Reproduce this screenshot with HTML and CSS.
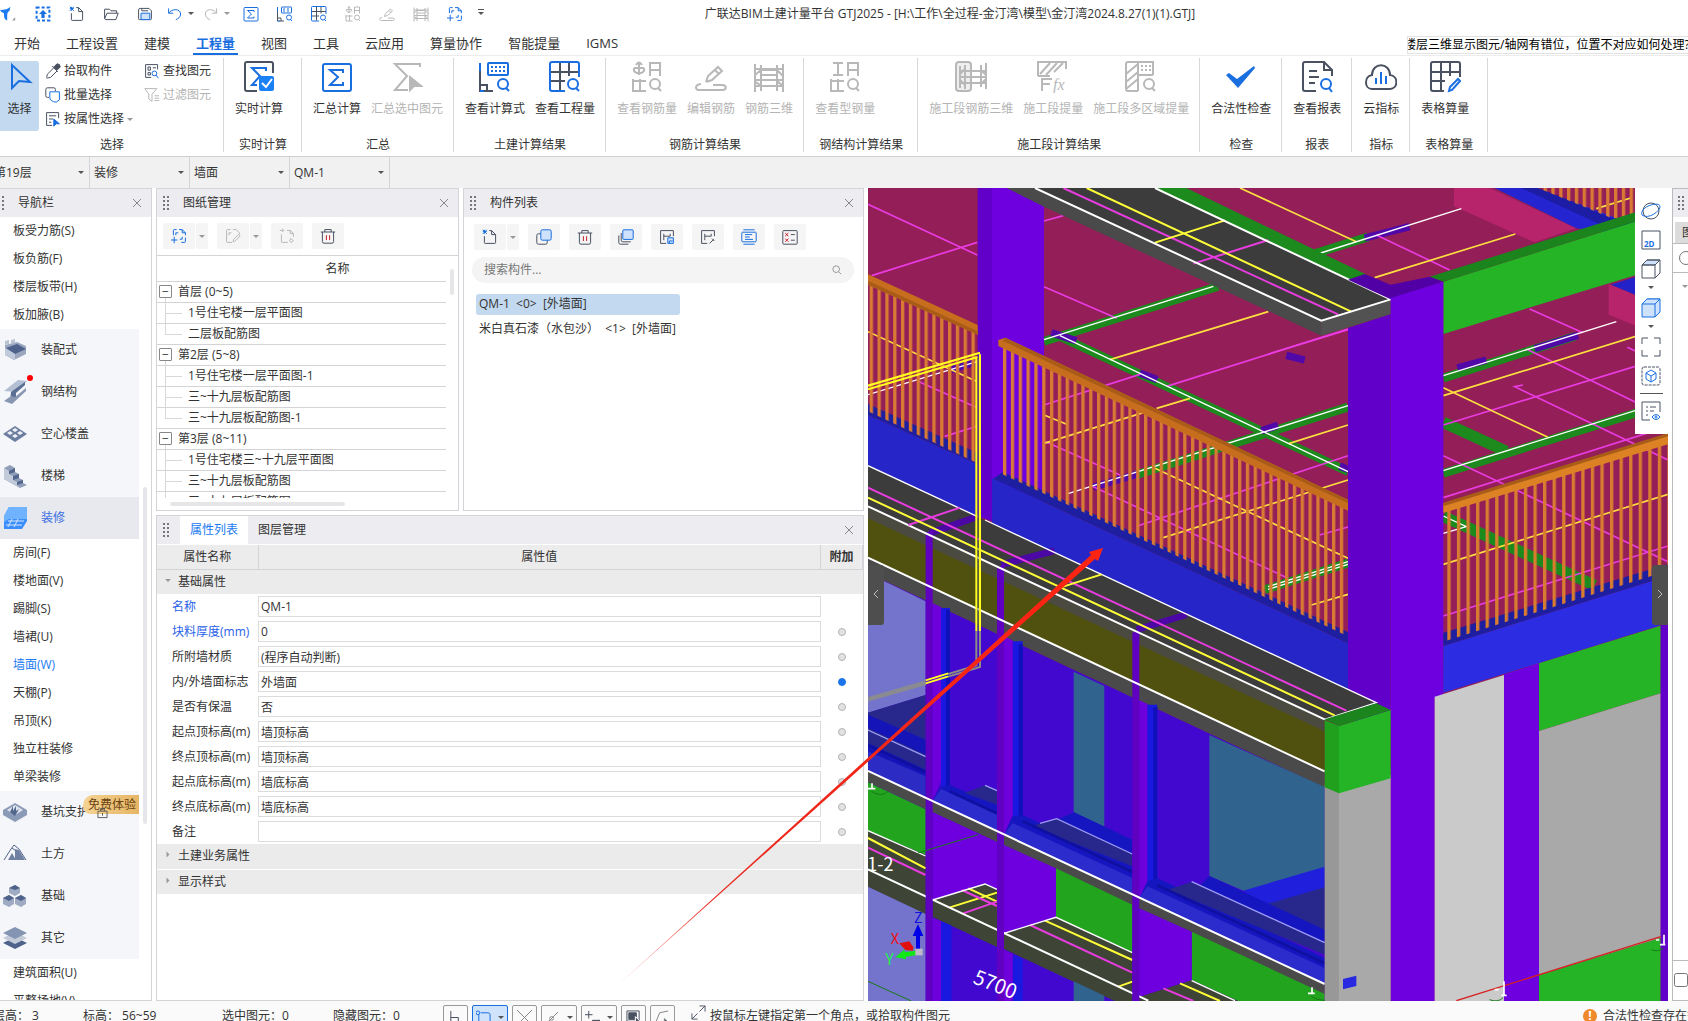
FILE: index.html
```html
<!DOCTYPE html>
<html lang="zh-CN">
<head>
    <meta charset="UTF-8">
    <meta name="viewport" content="width=device-width, initial-scale=1.0">
    <title>广联达BIM土建计量平台 GTJ2025</title>
    <link rel="stylesheet" href="styles.css">
</head>
<body>
    <!-- shared icons -->
    <svg class="sprite" aria-hidden="true">
        <symbol id="i-sigma" viewBox="0 0 32 32"><rect x="2" y="3" width="28" height="27" rx="2"/><path d="M22 12V9H9l8 7-8 8h13v-3"/></symbol>
        <symbol id="i-formula" viewBox="0 0 32 32"><path d="M1 10v20h13M1 24h7v6" class="ink"/><path d="M1 10V2M1 30h4"/><rect x="9" y="2" width="20" height="12" rx="1"/><path d="M12 6h15M12 10h15" stroke-dasharray="2 2"/><circle cx="24" cy="23" r="5"/><path d="M27 27l3 3"/></symbol>
        <symbol id="i-grid" viewBox="0 0 32 32"><path d="M1 11h29M1 20h15M11 1v28M20 1v14" class="ink"/><path d="M16 30H3q-2 0-2-2V3q0-2 2-2h25q2 0 2 2v13"/><circle cx="24" cy="23" r="5"/><path d="M27 27l3 3"/></symbol>
        <symbol id="i-rebar" viewBox="0 0 32 32"><path d="M8 1v13M5 4q3-5 6 0M3 7c-2 7 12 7 10 0M3 7h10M19 15V2h10v13M19 9h10M2 18v12h13M9 18v12M2 20h13"/><circle cx="24" cy="23" r="5"/><path d="M27 27l3 3"/></symbol>
        <symbol id="i-edit" viewBox="0 0 32 32"><path d="M11 21l2-6L23 6l4 4-10 9-6 2M20 9l4 4M6 23c-7 1-6 6-1 6h22c5 0 5-5 0-5h-9"/></symbol>
        <symbol id="i-rebar3d" viewBox="0 0 32 32"><path d="M2 3v28M8 4v26M24 4v26M30 3v28M2 8h28M2 14l6-5h16l6 6M3 19h26M3 25h26M8 14h16M3 21l5 4M24 20l5 4"/></symbol>
        <symbol id="i-steel" viewBox="0 0 32 32"><path d="M4 2h10M4 14h10M9 2v12M19 15V2h10v13M19 9h10M2 18v12h13M9 18v12M2 20h13"/><circle cx="24" cy="23" r="5"/><path d="M27 27l3 3"/></symbol>
        <symbol id="i-newdwg" viewBox="0 0 20 20"><path d="M3 9V3q0-1 1-1h3M10 2h4l4 4v3M18 12v5q0 1-1 1h-4M4 11v8M0 15h8M6 6h3M6 6v3M14 11v3h-3M14 2v4h4"/></symbol>
        <symbol id="i-newfile" viewBox="0 0 20 20"><path d="M3 9v8q0 1 1 1h12q1 0 1-1V7l-5-5H9M12 2v5h5" class="ink"/><path d="M1 1l5 5M6 1L1 6M3 1v5M1 3h5"/></symbol>
        <symbol id="i-trash" viewBox="0 0 20 20"><path d="M1 5h18M6 5V2h8v3M3 5v12q0 2 2 2h10q2 0 2-2V5" class="ink"/><path d="M8 9v6M12 9v6" class="red"/></symbol>
        <symbol id="i-close" viewBox="0 0 10 10"><path d="M1 1l8 8M9 1l-8 8"/></symbol>
        <symbol id="i-dots" viewBox="0 0 6 14"><path d="M1 0v14M5 0v14" stroke-dasharray="2 2"/></symbol>
        <symbol id="i-search" viewBox="0 0 12 12"><circle cx="5" cy="5" r="4"/><path d="M8 8l3 3"/></symbol>
        <symbol id="i-cube" viewBox="0 0 20 20"><path d="M1 6l5-5h13l-5 5z" class="pale"/><path d="M1 6l5-5h13v13l-5 5H1zM1 6h13v13M14 6l5-5"/></symbol>
    </svg>

    <div class="app">
        <header class="titlebar">
            <div class="quick">
                <button class="qbtn logo" aria-label="广联达"><svg viewBox="0 0 20 20"><path d="M0 5q9 0 13-4l-1 5q-3 1-3 5v7q-4-1-4-6V9q-3 0-5-4z" fill="#1a7bf2" stroke="none"/><path d="M19 14v4h-4z" fill="#999" stroke="none"/></svg></button>
                <button class="qbtn" aria-label="上传"><svg viewBox="0 0 20 20"><rect x="2" y="2" width="16" height="16" stroke-dasharray="3 2" stroke-width="2"/><path d="M10 5l5 5h-3v5H8v-5H5z" fill="#1a6fe0" stroke="none"/></svg></button>
                <button class="qbtn" aria-label="新建"><svg><use href="#i-newfile"/></svg></button>
                <button class="qbtn" aria-label="打开"><svg class="dark" viewBox="0 0 20 20"><path d="M2 16V4h6l2 2h7v3M2 16L5 9h14l-3 8H3z"/></svg></button>
                <button class="qbtn" aria-label="保存"><svg viewBox="0 0 20 20"><path d="M4 3h11l3 3v10q0 1-1 1H3q-1 0-1-1V5q0-2 2-2zM6 3v3h8" class="ink"/><path d="M5 17V9h11v8z" class="pale"/></svg></button>
                <button class="qbtn narrow" aria-label="撤销"><svg viewBox="0 0 20 20"><path d="M2 3v6h6M2 9c4-6 15-6 15 1 0 4-3 6-6 7"/></svg></button>
                <i class="caret"></i>
                <button class="qbtn narrow off" aria-label="恢复"><svg viewBox="0 0 20 20"><path d="M17 3v6h-6M17 9C13 3 3 3 3 10c0 4 3 6 6 7"/></svg></button>
                <i class="caret light"></i>
                <button class="qbtn" aria-label="汇总计算"><svg><use href="#i-sigma"/></svg></button>
                <button class="qbtn" aria-label="查看计算式"><svg><use href="#i-formula"/></svg></button>
                <button class="qbtn" aria-label="查看工程量"><svg><use href="#i-grid"/></svg></button>
                <button class="qbtn off" aria-label="查看钢筋量"><svg><use href="#i-rebar"/></svg></button>
                <button class="qbtn off" aria-label="编辑钢筋"><svg><use href="#i-edit"/></svg></button>
                <button class="qbtn off" aria-label="钢筋三维"><svg><use href="#i-rebar3d"/></svg></button>
                <button class="qbtn" aria-label="添加图纸"><svg><use href="#i-newdwg"/></svg></button>
                <button class="qbtn more" aria-label="更多"><i class="caret"></i></button>
            </div>
            <h1>广联达BIM土建计量平台 GTJ2025 - [H:\工作\全过程-金汀湾\模型\金汀湾2024.8.27(1)(1).GTJ]</h1>
        </header>

        <div class="tabrow">
            <nav class="tabs">
                <a href="#">开始</a>
                <a href="#">工程设置</a>
                <a href="#">建模</a>
                <a href="#" class="active">工程量</a>
                <a href="#">视图</a>
                <a href="#">工具</a>
                <a href="#">云应用</a>
                <a href="#">算量协作</a>
                <a href="#">智能提量</a>
                <a href="#">IGMS</a>
            </nav>
            <input class="help" type="text" aria-label="帮助搜索" value="楼层三维显示图元/轴网有错位，位置不对应如何处理?">
        </div>

        <div class="ribbon">
            <section class="group first">
                <div class="tools">
                    <button class="big pressed"><svg viewBox="0 0 32 32"><path d="M8 4v23l7-7 11 1z"/></svg>选择</button>
                    <div class="stack">
                        <button class="small"><svg class="dark" viewBox="0 0 20 20"><path d="M2 18l1-4 8-8 4 4-8 8-5 1M9 4l7 7" /><path d="M11 5l4-4q4 0 4 4l-4 4z" fill="#4a5262"/></svg>拾取构件</button>
                        <button class="small"><svg viewBox="0 0 20 20"><path d="M5 13H3q-2 0-2-2V3q0-2 2-2h8q2 0 2 2v2" class="ink"/><path d="M6 6h12v10l-4 3q-8-1-8-6z"/></svg>批量选择</button>
                        <button class="small"><svg viewBox="0 0 20 20"><path d="M9 18H2V2h15v7M5 6h9M5 10h5M5 14h3" class="ink"/><path d="M11 10v9l3-3h4z" fill="#1a6fe0"/></svg>按属性选择<i class="caret light"></i></button>
                    </div>
                    <div class="stack second">
                        <button class="small"><svg viewBox="0 0 20 20"><path d="M9 18H2V2h15v6M5 5h3v4H5zM11 6h4M5 12h3v3H5z" class="ink"/><circle cx="13" cy="13" r="3"/><path d="M15 15l3 4"/></svg>查找图元</button>
                        <button class="small off" disabled><svg viewBox="0 0 20 20"><path d="M1 2h15l-6 7v9l-4-3V9zM13 11h6M13 14h6M13 17h6"/></svg>过滤图元</button>
                    </div>
                </div>
                <h2>选择</h2>
            </section>
            <section class="group">
                <div class="tools">
                    <button class="big"><svg viewBox="0 0 32 32"><path d="M14 30H4q-2 0-2-2V3q0-2 2-2h24q2 0 2 2v9" class="ink"/><path d="M23 10V7H9l8 8-8 9h5"/><rect x="16" y="15" width="15" height="15" rx="2" fill="#1a80f5" stroke="none"/><path d="M19 22l4 4 6-8" class="white"/></svg>实时计算</button>
                </div>
                <h2>实时计算</h2>
            </section>
            <section class="group">
                <div class="tools">
                    <button class="big"><svg><use href="#i-sigma"/></svg>汇总计算</button>
                    <button class="big off" disabled><svg viewBox="0 0 32 32"><path d="M29 6V3H4l12 12L4 29h13"/><path d="M19 16v13l4-4h7z" fill="#b8b8b8"/></svg>汇总选中图元</button>
                </div>
                <h2>汇总</h2>
            </section>
            <section class="group">
                <div class="tools">
                    <button class="big"><svg><use href="#i-formula"/></svg>查看计算式</button>
                    <button class="big"><svg><use href="#i-grid"/></svg>查看工程量</button>
                </div>
                <h2>土建计算结果</h2>
            </section>
            <section class="group">
                <div class="tools">
                    <button class="big off" disabled><svg><use href="#i-rebar"/></svg>查看钢筋量</button>
                    <button class="big off" disabled><svg><use href="#i-edit"/></svg>编辑钢筋</button>
                    <button class="big off" disabled><svg><use href="#i-rebar3d"/></svg>钢筋三维</button>
                </div>
                <h2>钢筋计算结果</h2>
            </section>
            <section class="group">
                <div class="tools">
                    <button class="big off" disabled><svg><use href="#i-steel"/></svg>查看型钢量</button>
                </div>
                <h2>钢结构计算结果</h2>
            </section>
            <section class="group">
                <div class="tools">
                    <button class="big off" disabled><svg viewBox="0 0 32 32"><rect x="1" y="1" width="15" height="29" rx="3" fill="#eee"/><path d="M5 5v22M10 4v24M26 4v22M31 2v26M5 10h26M5 16h26M5 22h26M5 13l5-5M26 9l5 5M5 19l5 5M26 23l5-5"/></svg>施工段钢筋三维</button>
                    <button class="big off" disabled><svg viewBox="0 0 32 32"><path d="M1 15V1h28v7M1 15h12M3 13L13 2M9 14L20 2M17 11l9-9M5 30V17M5 18h10M5 23h8"/><text x="16" y="29">fx</text></svg>施工段提量</button>
                    <button class="big off" disabled><svg viewBox="0 0 32 32"><path d="M13 30H3q-2 0-2-2V3q0-2 2-2h25v13M13 1v29M1 13L13 3M1 21l12-10M1 28l12-10M13 14h15"/><path d="M16 5h10M16 9h10" stroke-dasharray="2 2"/><circle cx="24" cy="23" r="5"/><path d="M27 27l3 3"/></svg>施工段多区域提量</button>
                </div>
                <h2>施工段计算结果</h2>
            </section>
            <section class="group">
                <div class="tools">
                    <button class="big"><svg viewBox="0 0 32 32"><path d="M1 14l3-2 8 6L29 5l1 2-17 20z" fill="#1a6fe0" stroke="none"/></svg>合法性检查</button>
                </div>
                <h2>检查</h2>
            </section>
            <section class="group">
                <div class="tools">
                    <button class="big"><svg viewBox="0 0 32 32"><path d="M15 30H4q-2 0-2-2V3q0-2 2-2h19l8 8v6M23 1v8h8M8 10h8M8 16h10M8 22h6" class="ink"/><circle cx="25" cy="23" r="5"/><path d="M28 27l3 4"/></svg>查看报表</button>
                </div>
                <h2>报表</h2>
            </section>
            <section class="group">
                <div class="tools">
                    <button class="big"><svg viewBox="0 0 32 32"><path d="M7 28c-8 0-8-13 0-14C7 1 25 1 25 14c9 1 8 14 0 14z" class="ink"/><path d="M11 17v6M16 11v12M21 15v8"/></svg>云指标</button>
                </div>
                <h2>指标</h2>
            </section>
            <section class="group">
                <div class="tools">
                    <button class="big"><svg viewBox="0 0 32 32"><path d="M15 30H4q-2 0-2-2V3q0-2 2-2h25q2 0 2 2v13M2 11h29M2 20h14M12 1v29M21 1v14" class="ink"/><path d="M20 30l1-4 8-8 2 2-8 9z"/></svg>表格算量</button>
                </div>
                <h2>表格算量</h2>
            </section>
        </div>

        <div class="selectors">
            <label class="pick"><select aria-label="楼层"><option>第19层</option></select></label>
            <label class="pick"><select aria-label="构件分类"><option>装修</option></select></label>
            <label class="pick"><select aria-label="构件类型"><option>墙面</option></select></label>
            <label class="pick"><select aria-label="构件"><option>QM-1</option></select></label>
        </div>

        <main class="workspace">
            <aside class="panel navpanel">
                <div class="panel-head"><svg class="dots"><use href="#i-dots"/></svg><h3>导航栏</h3><button class="close" aria-label="关闭"><svg><use href="#i-close"/></svg></button></div>
                <div class="nav">
                    <a href="#">板受力筋(S)</a>
                    <a href="#">板负筋(F)</a>
                    <a href="#">楼层板带(H)</a>
                    <a href="#">板加腋(B)</a>
                    <a href="#" class="cat"><svg viewBox="0 0 24 24"><path d="M2 7l12-3 9 4v8l-12 6-9-5z" fill="#9aa7bf"/><path d="M3 10l11-4 9 5-11 5z" fill="#4f628b"/><path d="M2 3l4-1v4L2 7zM8 2l4-1v4L8 6z" fill="#b9c3d4"/><path d="M2 10l10 6v6L2 17z" fill="#c0cada"/></svg>装配式</a>
                    <a href="#" class="cat"><svg viewBox="0 0 24 24"><path d="M1 11L15 0l9 1-11 11z" fill="#b3bfd2"/><path d="M8 12L22 2v3l-9 8v4l-6 5z" fill="#5b6e94"/><path d="M1 21l7-5 4 1 11-9v3L9 24z" fill="#8796b1"/></svg>钢结构<i class="reddot"></i></a>
                    <a href="#" class="cat"><svg viewBox="0 0 24 24"><path d="M0 12l12-8 12 8-12 8z" fill="#6c7d9f"/><path d="M4 11l3-2 3 2-3 2zM9 8l3-2 3 2-3 2zM9 14l3-2 3 2-3 2zM14 11l3-2 3 2-3 2z" fill="#eef1f6"/></svg>空心楼盖</a>
                    <a href="#" class="cat"><svg viewBox="0 0 24 24"><path d="M1 4l6-3 5 3v4l4 2v4l4 2v3l4 2-7 3L1 15z" fill="#8f9db8"/><path d="M1 4l5 3v3l4 2v4l4 2v3l4 3L1 15z" fill="#c2cbda"/><path d="M6 7l6-3v4l-6 2zM10 12l6-2v4l-6 2zM14 18l6-2v3l-6 2z" fill="#52658c"/></svg>楼梯</a>
                    <a href="#" class="cat current"><svg viewBox="0 0 24 24"><path d="M6 1h18v14l-5 8H1V10z" fill="#3b8dfb"/><path d="M6 1h18v12H6L1 16v-6z" fill="#6fb3ff"/><path d="M5 15h16M3 19h16M9 13l-4 8M15 13l-4 8" stroke="#d5e7ff"/></svg>装修</a>
                    <a href="#">房间(F)</a>
                    <a href="#">楼地面(V)</a>
                    <a href="#">踢脚(S)</a>
                    <a href="#">墙裙(U)</a>
                    <a href="#" class="current">墙面(W)</a>
                    <a href="#">天棚(P)</a>
                    <a href="#">吊顶(K)</a>
                    <a href="#">独立柱装修</a>
                    <a href="#">单梁装修</a>
                    <a href="#" class="cat"><svg viewBox="0 0 24 24"><path d="M0 10l12-7 12 7v5l-12 7-12-7z" fill="#8b9ab6"/><path d="M4 10l8-5 8 5-8 5z" fill="#dfe5ee"/><path d="M7 12l3-6v5l3-5v5l3-2-4 7z" fill="#52658c"/></svg>基坑支护<svg class="lock" viewBox="0 0 12 12"><path d="M1 4h10v7H1zM4 4V1h4v3M6 6v3" stroke="#555"/></svg><em class="trial">免费体验</em></a>
                    <a href="#" class="cat"><svg viewBox="0 0 24 24"><path d="M1 18L8 7l3-4 5 4 7 11M9 6l4 3" stroke="#52658c" stroke-width="1"/><path d="M5 18l4-7 4 7zM12 18V7l4 1 6 10z" fill="#6f80a2"/></svg>土方</a>
                    <a href="#" class="cat"><svg viewBox="0 0 24 24"><path d="M6 4l6-3 5 3v5l-5 3-6-3zM0 14l6-3 5 3v6l-5 3-6-3zM12 14l6-3 5 3v6l-5 3-6-3z" fill="#9eabc2"/><path d="M6 4l6-3 5 3-5 2zM0 14l6-3 5 3-5 3zM12 14l6-3 5 3-5 3z" fill="#4f628b"/></svg>基础</a>
                    <a href="#" class="cat"><svg viewBox="0 0 24 24"><path d="M0 17l12-6 12 6-12 6z" fill="#4f628b"/><path d="M0 12l12-6 12 6-12 6z" fill="#c3cbd9"/><path d="M0 7l12-6 12 6-12 6z" fill="#8495b4"/></svg>其它</a>
                    <a href="#">建筑面积(U)</a>
                    <a href="#">平整场地(V)</a>
                </div>
                <i class="navbar-thumb"></i>
            </aside>

            <div class="center">
                <div class="upper">
                    <section class="panel drawings">
                        <div class="panel-head"><svg class="dots"><use href="#i-dots"/></svg><h3>图纸管理</h3><button class="close" aria-label="关闭"><svg><use href="#i-close"/></svg></button></div>
                        <div class="iconbar">
                            <span class="split"><button aria-label="添加图纸"><svg><use href="#i-newdwg"/></svg></button><button class="drop" aria-label="更多"><i class="caret light"></i></button></span>
                            <span class="split off"><button aria-label="编辑图纸"><svg viewBox="0 0 20 20"><path d="M9 18H3q-1 0-1-1V3q0-1 1-1h4M10 2h4l4 4v2M5 6h3M5 6v3M10 17l1-3 6-6 2 2-7 7z"/></svg></button><button class="drop" aria-label="更多"><i class="caret light"></i></button></span>
                            <button class="off" aria-label="替换图纸"><svg viewBox="0 0 20 20"><path d="M3 8v9q0 1 1 1h7M10 3h4l4 4v4M1 3h5l-2-2M6 3L4 5M14 3v4h4M13 16l2-3 3 3-3 2z"/></svg></button>
                            <button aria-label="删除图纸"><svg><use href="#i-trash"/></svg></button>
                        </div>
                        <div class="tree-head">名称</div>
                        <ul class="tree">
                            <li class="node"><button aria-label="折叠">−</button>首层 (0~5)</li>
                            <li>1号住宅楼一层平面图</li>
                            <li class="last">二层板配筋图</li>
                            <li class="node"><button aria-label="折叠">−</button>第2层 (5~8)</li>
                            <li>1号住宅楼一层平面图-1</li>
                            <li>三~十九层板配筋图</li>
                            <li class="last">三~十九层板配筋图-1</li>
                            <li class="node"><button aria-label="折叠">−</button>第3层 (8~11)</li>
                            <li>1号住宅楼三~十九层平面图</li>
                            <li>三~十九层板配筋图</li>
                            <li>三~十九层板配筋图</li>
                        </ul>
                        <i class="hthumb"></i>
                        <i class="vthumb"></i>
                    </section>

                    <section class="panel components">
                        <div class="panel-head"><svg class="dots"><use href="#i-dots"/></svg><h3>构件列表</h3><button class="close" aria-label="关闭"><svg><use href="#i-close"/></svg></button></div>
                        <div class="iconbar">
                            <span class="split"><button aria-label="新建"><svg><use href="#i-newfile"/></svg></button><button class="drop" aria-label="更多"><i class="caret light"></i></button></span>
                            <button aria-label="复制"><svg viewBox="0 0 20 20"><path d="M6 6H3q-2 0-2 2v9q0 2 2 2h9q2 0 2-2v-3" class="ink"/><rect x="6" y="1" width="13" height="13" rx="2" class="pale"/></svg></button>
                            <button aria-label="删除"><svg><use href="#i-trash"/></svg></button>
                            <button aria-label="层间复制"><svg viewBox="0 0 20 20"><path d="M4 5v9q0 2 2 2h10M1 8v9q0 2 2 2h10" class="ink"/><rect x="6" y="1" width="13" height="12" rx="1" class="pale"/></svg></button>
                            <button aria-label="存档"><svg viewBox="0 0 20 20"><path d="M9 18H2V2h16v7M6 6v8M6 9h8M14 6v3" class="ink"/><path d="M11 11h7v7h-7zM13 18v-3h4" class="pale"/></svg></button>
                            <button aria-label="提取"><svg class="dark" viewBox="0 0 20 20"><path d="M9 18H2V2h16v7M6 6v8M6 9h8M14 6v3M12 18l5-5M15 12l3 3" /></svg></button>
                            <button aria-label="排序"><svg viewBox="0 0 20 20"><path d="M3 1h14M3 19h14M5 7h9M5 10h6M5 13h10"/><rect x="1" y="4" width="18" height="12" rx="1"/></svg></button>
                            <button aria-label="批量"><svg viewBox="0 0 20 20"><rect x="1" y="2" width="18" height="17" rx="1" class="ink"/><path d="M11 7h5M11 14h5" class="ink"/><path d="M4 5l4 4M8 5L4 9M4 12l4 4M8 12l-4 4" class="red"/></svg></button>
                        </div>
                        <label class="search"><input type="search" placeholder="搜索构件..." aria-label="搜索构件"><svg><use href="#i-search"/></svg></label>
                        <ul class="complist">
                            <li class="selected">QM-1&nbsp; &lt;0&gt;&nbsp; [外墙面]</li>
                            <li>米白真石漆（水包沙）&nbsp; &lt;1&gt;&nbsp; [外墙面]</li>
                        </ul>
                    </section>
                </div>

                <section class="panel props">
                    <div class="panel-head"><svg class="dots"><use href="#i-dots"/></svg><button class="ptab active">属性列表</button><button class="ptab">图层管理</button><button class="close" aria-label="关闭"><svg><use href="#i-close"/></svg></button></div>
                    <table>
                        <thead>
                            <tr><th class="c-name">属性名称</th><th>属性值</th><th class="c-add">附加</th></tr>
                        </thead>
                        <tbody>
                            <tr class="section"><td colspan="3"><i class="caret light"></i>基础属性</td></tr>
                            <tr><td class="blue"><label for="p1">名称</label></td><td><input id="p1" type="text" value="QM-1"></td><td></td></tr>
                            <tr><td class="blue"><label for="p2">块料厚度(mm)</label></td><td><input id="p2" type="text" value="0"></td><td><input type="checkbox" aria-label="附加块料厚度"></td></tr>
                            <tr><td><label for="p3">所附墙材质</label></td><td><input id="p3" type="text" value="(程序自动判断)"></td><td><input type="checkbox" aria-label="附加所附墙材质"></td></tr>
                            <tr><td><label for="p4">内/外墙面标志</label></td><td><input id="p4" type="text" value="外墙面"></td><td><input type="checkbox" aria-label="附加内/外墙面标志" checked></td></tr>
                            <tr><td><label for="p5">是否有保温</label></td><td><input id="p5" type="text" value="否"></td><td><input type="checkbox" aria-label="附加是否有保温"></td></tr>
                            <tr><td><label for="p6">起点顶标高(m)</label></td><td><input id="p6" type="text" value="墙顶标高"></td><td><input type="checkbox" aria-label="附加起点顶标高"></td></tr>
                            <tr><td><label for="p7">终点顶标高(m)</label></td><td><input id="p7" type="text" value="墙顶标高"></td><td><input type="checkbox" aria-label="附加终点顶标高"></td></tr>
                            <tr><td><label for="p8">起点底标高(m)</label></td><td><input id="p8" type="text" value="墙底标高"></td><td><input type="checkbox" aria-label="附加起点底标高"></td></tr>
                            <tr><td><label for="p9">终点底标高(m)</label></td><td><input id="p9" type="text" value="墙底标高"></td><td><input type="checkbox" aria-label="附加终点底标高"></td></tr>
                            <tr><td><label for="p10">备注</label></td><td><input id="p10" type="text" value=""></td><td><input type="checkbox" aria-label="附加备注"></td></tr>
                            <tr class="section"><td colspan="3"><i class="caret light side"></i>土建业务属性</td></tr>
                            <tr class="section"><td colspan="3"><i class="caret light side"></i>显示样式</td></tr>
                        </tbody>
                    </table>
                </section>
            </div>

            <section class="viewport">
                <svg class="scene" viewBox="0 0 2400 2439" preserveAspectRatio="xMidYMid slice">
                    <defs>
                        <pattern id="posts" patternUnits="userSpaceOnUse" x="5" y="0" width="23.5" height="100"><rect width="10" height="100" fill="#d87a33"/></pattern>
                        <pattern id="posts-main" patternUnits="userSpaceOnUse" x="405" y="0" width="23.5" height="100"><rect width="10" height="100" fill="#d87a33"/></pattern>
                        <pattern id="posts-right" patternUnits="userSpaceOnUse" x="1738" y="0" width="28.7" height="100"><rect width="10" height="100" fill="#d87c30"/></pattern>
                    </defs>
                    <rect width="2400" height="2439" fill="#941e58"/>

                    <!-- far wall and beam, top right -->
                    <path fill="#b8246c" d="M1758 0H1865L2125 121L2000 163L1758 55z"/>
                    <path fill="#2424d0" d="M1880 0H2020L2400 100V160L2125 121z"/>
                    <path fill="#1c1ca4" d="M1960 0H2020L2300 120H2220z"/>
                    <path fill="#941e58" d="M2010 0H2400V70L2250 92z"/>
                    <path stroke="#ffe840" stroke-width="5" d="M2185 62L2288 30"/>
                    <path fill="url(#posts-main)" d="M2010 0H2400V90H2230z"/>
                    <path fill="#2222c8" d="M2228 290L2400 236V360z"/>
                    <path fill="#b8246c" d="M2222 288L2400 362V452L2222 380z"/>

                    <!-- green beams under the slab -->
                    <g fill="none" stroke="#1c8a1c" stroke-width="26">
                        <path d="M528 460L1050 295M570 443L1440 851M800 862L1440 657M1190 1205L1440 1125M1330 200L1500 147"/>
                        <path d="M1726 570L2120 445M1726 856L2400 645"/>
                        <path stroke-width="34" d="M1726 703L1915 790M1726 985L2180 1192"/>
                    </g>
                    <g fill="none" stroke="#5008a8" stroke-width="22">
                        <path d="M550 434L625 458M815 555L868 575M676 897L812 857M1180 728L1230 712M1490 150L1625 116M1768 540L1855 516M2000 482L2130 442M1255 502L1310 516M1415 834L1440 844M250 545L320 522"/>
                    </g>
                    <g fill="none" stroke="#e83ce0" stroke-width="5">
                        <path d="M0 49L328 201M11 263L328 163M528 99L586 83M528 296L746 391M896 595L1440 423M528 651L816 559M528 759L756 861M676 896L1260 1171M811 1013L1440 803M1355 1041L1440 1017M150 580L329 660M230 745L329 714"/>
                        <path d="M1525 141L1745 246M1985 363L2145 434M1726 711L2400 505M1975 483L2400 690M1965 591L1940 596L2400 816M2278 478L2400 535M1726 929L2400 716M1726 803L2400 1121M1726 1284L2400 1074"/>
                    </g>
                    <g fill="none" stroke="#ffe040" stroke-width="5">
                        <path d="M0 431L325 580M726 515L1201 371M866 661L966 631M528 766L826 674M528 681L596 709M861 841L1440 1111M886 1049L1440 876M1262 767L1440 711M1330 1251L1440 1219M1116 0L1465 161"/>
                        <path d="M1520 269L1942 138M1726 623L2400 415M1726 599L2040 748M1726 1129L2400 919"/>
                    </g>
                    <g fill="none" stroke="#fff" stroke-width="4">
                        <path d="M528 455L1036 295M576 443L1440 851M600 917L1440 653M1200 1196L1440 1121M1200 1204L1440 1129M1358 195L1780 62M1726 563L2245 401M1726 848L2400 637M1726 984L1795 1016L1726 1036M0 620L329 520"/>
                    </g>
                    <path fill="#25b425" d="M1726 281L2400 70V232L1726 438z"/>
                    <path fill="#1c841c" d="M1685 266L2400 42V70L1726 281z"/>

                    <!-- column 1 -->
                    <path fill="#6000c8" d="M329 0H372V1000L329 985z"/>
                    <path fill="#6e00e0" d="M372 0H528V1000H372z"/>

                    <!-- upper slab -->
                    <path fill="#1c8a1c" d="M861 0H955L1500 262L1430 285z"/>
                    <path fill="#4a4a4a" d="M416 0H501L1360 398V443L528 56z"/>
                    <path fill="#3c3c3c" d="M501 0H861L1568 334L1360 398z"/>
                    <path fill="#525252" d="M1360 398L1568 334V379L1360 443z"/>
                    <path fill="none" stroke="#e83ce0" stroke-width="6" d="M586 0L1410 379M976 227L1201 156"/>
                    <path fill="none" stroke="#ffff38" stroke-width="6" d="M656 0L1450 371M861 164L1071 97"/>
                    <path fill="none" stroke="#fff" stroke-width="6" d="M501 0L1360 398L1568 334L861 0"/>
                    <path stroke="#e83ce0" stroke-width="5" d="M1200 499L1440 425"/>

                    <!-- main column -->
                    <path fill="#5000a4" d="M1440 275L1490 258L1568 290L1685 266L1726 281L1568 334z"/>
                    <path fill="#6000c8" d="M1440 420L1568 379V1600H1440z"/>
                    <path fill="#6e00e0" d="M1568 330L1726 281V1530H1700V2439H1568z"/>

                    <!-- balcony beams -->
                    <path fill="#2525c8" d="M0 681L329 829V986L0 833zM372 870L1440 1366V1505L372 1006z"/>
                    <path fill="#1e1ea0" d="M0 648L329 795V829L0 681zM376 872L405 852L1440 1332V1366z"/>
                    <path fill="#2c2ce2" d="M1726 1374L2400 1164V1305L1726 1514z"/>
                    <path fill="#1e1ea0" d="M1726 1334L2400 1128V1164L1726 1374z"/>

                    <!-- railings -->
                    <path fill="url(#posts)" d="M0 280L329 430V826L0 670z"/>
                    <path fill="#c66e1e" d="M0 259L329 411V440L0 290z"/>
                    <path fill="#a85c18" d="M0 278L329 430V440L0 290z"/>
                    <path fill="url(#posts-main)" d="M400 465L1430 950V1340L400 857z"/>
                    <path fill="#c66e1e" d="M391 456L412 449L1440 935V968L391 474z"/>
                    <path fill="#a85c18" d="M412 449L1440 935V946L404 458z"/>
                    <path fill="url(#posts-right)" d="M1730 965L2400 760V1148L1730 1360z"/>
                    <path fill="#dc8224" d="M1726 950L2400 741V769L1726 975z"/>
                    <path fill="#a85c18" d="M1726 944L2400 735V745L1726 955z"/>

                    <!-- lower slab edge -->
                    <path fill="#3c3c3c" d="M0 833L1525 1544L1370 1594L0 955z"/>
                    <path stroke="#4c08a4" stroke-width="20" d="M186 1035L329 986M400 1130L560 1088M806 1325L956 1280"/>
                    <path fill="#50500f" d="M0 955L1370 1594V1750L0 1109z"/>
                    <path fill="#4a4a40" d="M0 955L1370 1594V1630L0 991z"/>
                    <path fill="#4a4a4a" d="M0 1109L1370 1750V1799L0 1156z"/>
                    <path fill="#4208d0" d="M0 1156L1370 1799V2439H0z"/>

                    <!-- windows -->
                    <path fill="#7474cc" d="M0 1156L173 1240V1521L0 1574z"/>
                    <path fill="#28288c" d="M0 1574L173 1521V1720L0 1640z"/>
                    <path fill="#1414b8" d="M0 1580L173 1655V1830L0 1749z"/>
                    <path fill="#28288c" d="M0 1620L173 1700V1745L0 1665z"/>
                    <path fill="#2c2cc4" d="M0 1690L173 1765V1830L0 1749z"/>
                    <path fill="#30648f" d="M617 1451L709 1494V1916L617 1874zM1024 1641L1370 1797V2060L1126 2108L1024 2064z"/>
                    <path fill="#2020dc" d="M1126 2108L1370 2036V2110L1190 2155z"/>
                    <path fill="#28288c" d="M1190 2150L1370 2098V2250z"/>
                    <path fill="#1818e0" d="M219 1260H246V1820H219zM434 1360H464V1910H434zM838 1550H868V2100H838z"/>
                    <path fill="#1010b8" d="M234 1265H246V1820H234zM452 1368H464V1910H452zM856 1558H868V2100H856z"/>
                    <path fill="#1616c0" d="M219 1795L246 1791L387 1850V1930L194 1838zM434 1885L464 1881L793 2035V2119L408 1940zM617 1872L793 1955V2010L560 1900zM838 2080L868 2070L1370 2310V2388L814 2129zM1024 2064L1370 2225V2290L980 2110z"/>
                    <path fill="#28288c" d="M290 1815L351 1792L387 1808V1850zM490 1915L566 1892L793 1998V2035zM900 2105L971 2081L1370 2266V2300z"/>
                    <path fill="#2c2ccc" d="M219 1803L387 1880V1930L194 1838zM434 1905L793 2070V2119L408 1940zM838 2095L1370 2340V2388L814 2129z"/>
                    <path stroke="#1010a0" stroke-width="8" fill="none" d="M246 1810L387 1876M464 1900L793 2052M868 2092L1370 2326M0 1672L173 1752"/>
                    <path fill="none" stroke="#9c9cf4" stroke-width="4" d="M0 1626L173 1706M351 1792L387 1808M516 1906L566 1892L793 1998M971 2081L1370 2264"/>

                    <!-- band below the sill -->
                    <path fill="#4a4a4a" d="M0 1749L1370 2388V2420L0 1783z"/>
                    <path fill="#22a41e" d="M0 1783L173 1864V2001L0 1928zM564 2041L793 2150V2294L564 2188zM971 2231L1370 2418V2439H1110L971 2376z"/>
                    <path fill="#3e4436" d="M0 1928L173 2001V2180L0 2098z"/>
                    <path fill="#3e4436" d="M194 2136L351 2086L387 2104V2277L194 2187z"/>
                    <path fill="#3e4436" d="M408 2236L564 2186L793 2294V2439H740L408 2283z"/>
                    <path fill="#3e4436" d="M814 2426L971 2376L1110 2439H814z"/>
                    <path fill="#7474cc" d="M0 2096L173 2178V2439H0z"/>
                    <path fill="#1818e0" d="M219 2200L250 2212V2439H219zM434 2300L464 2312V2439H434z"/>
                    <path fill="#30648f" d="M617 2380L709 2423V2439H617z"/>
                    <path fill="#6e00e0" d="M194 1873L387 1962V2104L351 2086L194 2136zM408 1971L564 2041V2186L408 2236zM814 2161L971 2231V2376L814 2426z"/>
                    <g fill="none" stroke-width="6">
                        <path stroke="#ffff38" d="M0 1950L173 2041M301 2101L387 2141M246 2158L387 2114M531 2198L793 2316M751 2396L793 2381M936 2386L1056 2439"/>
                        <path stroke="#e83ce0" d="M0 1979L173 2061M281 2106L387 2154M286 2176L387 2141M486 2211L793 2354M886 2401L976 2439"/>
                        <path stroke="#fff" stroke-width="4" d="M0 1928L173 2004M194 2136L351 2088L387 2104M408 2236L564 2188L793 2294M971 2378L1101 2438"/>
                        <path stroke="#fff" d="M0 2044L841 2438"/>
                    </g>

                    <!-- mullions -->
                    <path fill="#6000c0" d="M173 1035L194 1026V2439H173zM387 1140L408 1128V2439H387zM793 1335L814 1325V2439H793z"/>
                    <path fill="#6e00dc" d="M194 1246L219 1257V1780L194 1838zM408 1345L434 1357V1880L408 1940zM814 1537L838 1548V2080L814 2129zM194 2190L219 2200V2439H194zM408 2285L434 2298V2439H408z"/>
                    <g fill="none" stroke="#fff" stroke-width="6">
                        <path stroke-width="4" d="M0 833L329 986M351 996L1525 1544L1370 1594"/>
                        <path d="M0 955L1370 1594M0 1109L1370 1750M0 1749L1370 2388"/>
                        <path stroke="#e83ce0" d="M0 899L1435 1568M121 1011L276 959"/>
                        <path stroke="#ffff38" d="M0 929L1400 1582M576 1199L701 1159"/>
                    </g>

                    <!-- corner block, walls -->
                    <path fill="#989898" d="M1370 1790H1413V2439H1370z"/>
                    <path fill="#a9a9a9" d="M1413 1800L1568 1760V2439H1413z"/>
                    <path fill="#20a01c" d="M1370 1596L1413 1614V1816L1370 1798z"/>
                    <path fill="#25b425" d="M1413 1614L1568 1566V1771L1413 1816z"/>
                    <path fill="#1c841c" d="M1370 1594L1525 1546L1568 1566L1413 1614z"/>
                    <path fill="#2828e0" d="M1425 2373L1465 2363V2394L1425 2404z"/>
                    <path fill="#cacaca" d="M1700 1526L1908 1461V2439H1700z"/>
                    <path fill="#6e00e0" d="M1908 1459L2013 1426V2439H1908z"/>
                    <path fill="#25b425" d="M2013 1426L2378 1313V1516L2013 1629z"/>
                    <path fill="#a9a9a9" d="M2013 1629L2378 1516V2250L2013 2362z"/>
                    <path fill="#25b425" d="M2013 2362L2378 2250V2439H2013z"/>
                    <path fill="#6000c8" d="M2378 1310L2400 1304V2439H2378z"/>
                    <path stroke="#d82020" stroke-width="4" d="M1765 2438L2378 2246"/>
                    <path fill="none" stroke="#187a18" stroke-width="3" d="M1865 2435q25 10 40-6M2350 2285q18 8 36-4M1330 2425q15 12 40 12M150 1995L330 1940M0 2380L130 2439M10 1810q30 20 50 0"/>

                    <!-- selected wall outline -->
                    <g fill="none" stroke="#ffff20" stroke-width="6">
                        <path d="M325 1330V505M336 1330V499M0 593L336 494M0 604L329 507"/>
                        <path stroke="#77774a" stroke-width="3" d="M330 1330V505"/>
                        <path stroke="#8c8c84" d="M325 1330V1432L241 1458M336 1330V1437L241 1466"/>
                        <path stroke="#8a8a92" stroke-width="14" d="M173 1484L0 1534"/>
                        <path d="M241 1456L173 1477M241 1465L173 1486"/>
                    </g>

                    <!-- axis triad -->
                    <path fill="#0000e8" d="M150 2208l16 36h-10v46h-12v-46h-10z"/>
                    <path fill="#e01010" d="M94 2266l30 -6l12 18l-2 10l-22 -2z"/>
                    <path fill="#10e818" d="M82 2308l28 -24v8l34 -4v14l-30 4v8z"/>
                    <rect x="142" y="2282" width="22" height="20" fill="#c0b8c8"/>
                    <g class="mark">
                        <text x="138" y="2204" font-size="42" fill="#1010e0">Z</text>
                        <text x="68" y="2268" font-size="44" fill="#f01010">X</text>
                        <text x="52" y="2330" font-size="48" fill="#20f050">Y</text>
                        <text x="-2" y="2050" font-size="54" fill="#fff">1-2</text>
                        <text x="312" y="2384" font-size="60" fill="#fff" transform="rotate(22 312 2384)">5700</text>
                    </g>
                    <path stroke="#fff" stroke-width="5" fill="none" d="M0 1802h22M12 1786v16M1320 2416h20M1332 2398v18M1900 2422h16M1908 2380v40M2376 2270h16M2388 2240v30M1880 2405h12M2364 2256h10"/>
                </svg>

                <button class="handle left" aria-label="收起左侧"><svg viewBox="0 0 6 10"><path d="M5 1L1 5l4 4"/></svg></button>
                <button class="handle right" aria-label="收起右侧"><svg viewBox="0 0 6 10"><path d="M1 1l4 4-4 4"/></svg></button>
                <div class="viewtools">
                    <button aria-label="动态观察"><svg viewBox="0 0 20 20"><circle cx="10" cy="10" r="8" class="ink"/><path d="M1 14C-2 6 17 0 19 5c1 5-12 14-18 9z"/></svg></button>
                    <button aria-label="二维"><svg viewBox="0 0 20 20"><rect x="1" y="1" width="18" height="18" class="ink"/><text x="3" y="17">2D</text></svg></button>
                    <button aria-label="视图方向"><svg class="dark"><use href="#i-cube"/></svg></button>
                    <i class="caret"></i>
                    <button aria-label="实体显示"><svg class="filled"><use href="#i-cube"/></svg></button>
                    <i class="caret"></i>
                    <button aria-label="全屏"><svg class="dark" viewBox="0 0 20 20"><path d="M1 7V1h6M13 1h6v6M19 13v6h-6M7 19H1v-6"/></svg></button>
                    <button aria-label="局部三维"><svg viewBox="0 0 20 20"><rect x="1" y="1" width="18" height="18" rx="2" class="ink" stroke-dasharray="3 1"/><path d="M10 4l5 3v6l-5 3-5-3V7zM5 7l5 3 5-3M10 10v6"/></svg></button>
                    <hr>
                    <button aria-label="显示设置"><svg viewBox="0 0 20 20"><path d="M9 19H1V1h18v10M5 6h2M9 6h6M5 10h2M9 10h4M5 14h2" class="ink"/><path d="M11 16q4-5 8 0-4 5-8 0z"/><circle cx="15" cy="16" r="1"/></svg></button>
                </div>
            </section>

            <aside class="rightpanel">
                <div class="panel-head"><svg class="dots"><use href="#i-dots"/></svg></div>
                <button class="rtab">图</button>
                <div class="rsearch"><input type="radio" aria-label="图层"></div>
                <div class="rbody"><i class="caret light"></i></div>
                <div class="rfoot"><input type="checkbox" aria-label="显示图层"></div>
            </aside>

            <svg class="callout" viewBox="0 0 1688 813" preserveAspectRatio="xMinYMin" aria-hidden="true">
                <defs><linearGradient id="fade" x1="0" y1="1" x2="1" y2="0"><stop offset="0" stop-color="#f5261a" stop-opacity=".4"/><stop offset=".2" stop-color="#e8281e"/><stop offset="1" stop-color="#ff2412"/></linearGradient></defs>
                <path fill="url(#fade)" d="M618 797L1091 367L1089 364L1103 360L1098 373L1095 371z"/>
            </svg>
        </main>

        <footer class="statusbar">
            <span class="stat s1">层高： 3</span>
            <span class="stat s2">标高： 56~59</span>
            <span class="stat s3">选中图元：0</span>
            <span class="stat s4">隐藏图元：0</span>
            <div class="modes">
                <button aria-label="正交"><svg viewBox="0 0 16 16"><path d="M3 1v14M3 8h8v7" class="ink"/></svg></button>
                <button class="wide on" aria-label="捕捉"><svg viewBox="0 0 16 16"><path d="M3 15V5M5 3h8q2 0 2 2v10"/><circle cx="2" cy="3" r="2"/></svg><i class="caret"></i></button>
                <button aria-label="交点"><svg class="grey" viewBox="0 0 16 16"><path d="M0 0l16 16M16 0L0 16"/></svg></button>
                <button class="wide" aria-label="中点"><svg class="grey" viewBox="0 0 16 16"><path d="M1 15L14 2"/><circle cx="7" cy="9" r="2"/></svg><i class="caret"></i></button>
                <button class="wide" aria-label="偏移"><svg class="dark" viewBox="0 0 16 16"><path d="M0 5h8M4 1v8M8 11h8v5H8z" fill="#4a5262"/></svg><i class="caret"></i></button>
                <button aria-label="选择模式"><svg class="dark" viewBox="0 0 16 16"><path d="M1 1h13v11H1z"/><path d="M3 3h8v7H3z" fill="#4a5262"/><path d="M10 7v9l3-3h3z" fill="#4a5262" stroke="#fff"/></svg></button>
                <button aria-label="折线"><svg class="grey" viewBox="0 0 16 16"><path d="M0 15L5 3l9-2"/><path d="M10 9v7l4-3z" fill="#4a5262"/></svg></button>
            </div>
            <svg class="diag" viewBox="0 0 16 16"><path d="M9 7l6-6M9 1h6v6M7 9l-6 6M1 9v6h6"/></svg>
            <span>按鼠标左键指定第一个角点，或拾取构件图元</span>
            <span class="warn"><b>!</b>合法性检查存在错误</span>
        </footer>
    </div>
</body>
</html>
```

FILE: styles.css
```css
:root {
    --ink: #4a5262;
    --blue: #1a6fe0;
    --text: #333;
    --line: #d4d4d8;
    --head: #ededf1;
}

* {
    margin: 0;
    padding: 0;
    box-sizing: border-box;
}

body {
    font-family: "Open Sans", "Noto Sans CJK SC", sans-serif;
    font-size: 12px;
    line-height: 20px;
    color: var(--text);
    background: #fff;
    overflow: hidden;
}

button, input, select {
    font: inherit;
    color: inherit;
    border: none;
    background: none;
}

a {
    color: inherit;
    text-decoration: none;
}

ul {
    list-style: none;
}

h1, h2, h3 {
    font-size: 12px;
    font-weight: 400;
}

svg {
    flex: none;
    fill: none;
    stroke: var(--blue);
}

/* icon strokes keep their width at every icon size */
symbol *, button path, button rect, button circle {
    vector-effect: non-scaling-stroke;
}

.sprite {
    position: absolute;
    width: 0;
    height: 0;
}

.ink { stroke: var(--ink); }
.red { stroke: #c8202c; }
.white { stroke: #fff; }
.pale { fill: #cfe2fb; }
.dark, .dark .ink { stroke: var(--ink); }
.grey { stroke: #888; }

.off {
    color: #b4b4b4;
    --ink: #b8b8b8;
    --blue: #b8b8b8;
}

.caret {
    flex: none;
    width: 0;
    height: 0;
    border: 3px solid transparent;
    border-top-color: #555;
    border-bottom: none;
}

.caret.light {
    border-top-color: #999;
}

.app {
    display: flex;
    flex-direction: column;
    height: 100vh;
    overflow: hidden;
}

/* title bar */
.titlebar {
    display: flex;
    align-items: center;
    height: 27px;
    padding-right: 278px;
}

.titlebar h1 {
    flex: 1;
    text-align: center;
    white-space: nowrap;
}

.quick {
    display: flex;
    align-items: center;
    width: 490px;
}

.qbtn {
    display: flex;
    justify-content: center;
    width: 34px;
}

.qbtn svg {
    width: 16px;
    height: 16px;
}

.qbtn.logo {
    width: 26px;
    justify-content: flex-start;
}

.qbtn.narrow {
    width: 26px;
}

.qbtn.narrow + .caret {
    margin-right: 4px;
}

.qbtn.more {
    width: 18px;
}

.more .caret {
    position: relative;
}

.more .caret::before {
    content: "";
    position: absolute;
    left: -3px;
    top: -6px;
    width: 6px;
    height: 1px;
    background: #555;
}

/* tabs */
.tabrow {
    display: flex;
    justify-content: space-between;
    height: 29px;
    border-bottom: 1px solid #ececec;
    padding-left: 11px;
}

.tabs {
    display: flex;
    gap: 20px;
    font-size: 13px;
}

.tabs a {
    padding: 6px 3px 0;
    border-bottom: 2px solid transparent;
}

.tabs .active {
    color: var(--blue);
    font-weight: 700;
    border-color: var(--blue);
}

.help {
    align-self: flex-end;
    width: 281px;
    height: 18px;
    margin-bottom: 1px;
    border: 1px solid #e2e2e2;
    border-right: none;
    text-indent: -4px;
    color: #000;
}

/* ribbon */
.ribbon {
    display: flex;
    height: 101px;
    border-bottom: 1px solid #cfcfcf;
}

.group {
    position: relative;
    display: flex;
    flex-direction: column;
    justify-content: space-between;
    padding: 5px 0 1px;
}

.group::after {
    content: "";
    position: absolute;
    right: 0;
    top: 2px;
    bottom: 4px;
    width: 1px;
    background: #d8d8d8;
}

.group h2 {
    padding: 0 15px;
    text-align: center;
}

.tools {
    display: flex;
    padding: 0 6px;
}

.first {
    width: 224px;
}

.first .tools {
    padding: 0;
}

.big {
    display: flex;
    flex-direction: column;
    align-items: center;
    gap: 6px;
    height: 70px;
    padding: 0 5px;
    white-space: nowrap;
}

.big svg {
    width: 32px;
    height: 32px;
    stroke-width: 2;
}

.big text {
    font: italic 16px "Liberation Serif", serif;
    fill: #b8b8b8;
    stroke: none;
}

.big.pressed {
    width: 39px;
    background: #c2d9f0;
    border-radius: 0 3px 3px 0;
}

.stack {
    display: flex;
    flex-direction: column;
    gap: 4px;
    padding-left: 6px;
}

.second {
    padding-left: 11px;
}

.small {
    display: flex;
    align-items: center;
    gap: 3px;
    height: 20px;
    white-space: nowrap;
}

.small svg {
    width: 16px;
    height: 16px;
}

/* selector row */
.selectors {
    display: flex;
    height: 31px;
    margin-left: -10px;
    background: #f1f1f1;
}

.pick {
    position: relative;
    width: 100px;
    border-right: 1px solid var(--line);
}

.pick::after {
    content: "";
    position: absolute;
    right: 5px;
    top: 14px;
    border: 3px solid transparent;
    border-top-color: #555;
    border-bottom: none;
}

.pick select {
    appearance: none;
    width: 100%;
    height: 31px;
    padding: 0 4px;
}

/* work area */
.workspace {
    position: relative;
    flex: 1;
    display: flex;
    gap: 4px;
    min-height: 0;
}

.panel {
    position: relative;
    display: flex;
    flex-direction: column;
    background: #fff;
    border: 1px solid var(--line);
    overflow: hidden;
}

.panel-head {
    flex: none;
    display: flex;
    align-items: center;
    height: 28px;
    padding: 0 9px 0 6px;
    background: var(--head);
}

.panel-head h3 {
    padding-left: 14px;
}

.dots {
    width: 6px;
    height: 14px;
    stroke: #777;
    stroke-width: 2;
}

.close {
    display: flex;
    margin-left: auto;
}

.close svg {
    width: 10px;
    height: 10px;
    stroke: #888;
}

.navpanel {
    flex: none;
    width: 152px;
    border-left: none;
}

.navpanel .panel-head {
    padding-left: 0;
}

.navpanel .dots {
    margin-left: -2px;
}

.nav {
    flex: 1;
    min-height: 0;
    width: 139px;
    overflow: hidden;
}

.nav a {
    position: relative;
    display: flex;
    align-items: center;
    height: 28px;
    padding-left: 13px;
}

.nav .cat {
    height: 42px;
    padding-left: 3px;
    gap: 14px;
    background: #f5f6f9;
}

.nav .cat > svg {
    width: 24px;
    height: 24px;
    stroke: none;
}

.nav .current {
    color: #1a7bf2;
}

.nav .cat.current {
    color: #3a6ee0;
    background: #e8e9ee;
}

.nav .cat > .lock {
    position: absolute;
    left: 97px;
    top: 16px;
    width: 11px;
    height: 12px;
    z-index: 1;
}

.reddot {
    position: absolute;
    left: 27px;
    top: 4px;
    width: 6px;
    height: 6px;
    border-radius: 50%;
    background: #f00;
}

.trial {
    position: absolute;
    right: 0;
    top: 4px;
    height: 19px;
    padding: 0 3px 0 5px;
    line-height: 19px;
    font-style: normal;
    font-size: 12px;
    color: #6a4310;
    background: linear-gradient(90deg, #f5d394, #e6b564);
    border-radius: 10px 0 0 8px;
}

.navbar-thumb {
    position: absolute;
    right: 4px;
    top: 298px;
    width: 4px;
    height: 337px;
    border-radius: 2px;
    background: #e6e6ea;
}

.center {
    flex: none;
    width: 708px;
    display: flex;
    flex-direction: column;
    gap: 4px;
}

.upper {
    flex: none;
    display: flex;
    gap: 4px;
    height: 323px;
}

.drawings {
    width: 303px;
}

.components {
    flex: 1;
}

.iconbar {
    flex: none;
    display: flex;
    gap: 9px;
    padding: 6px 6px 0;
    height: 39px;
}

.iconbar button {
    display: flex;
    align-items: center;
    justify-content: center;
    width: 32px;
    height: 26px;
    background: #f5f5f5;
    border-radius: 2px;
}

.iconbar svg {
    width: 16px;
    height: 16px;
}

.split {
    display: flex;
    gap: 1px;
}

.iconbar .drop {
    width: 12px;
}

.components .iconbar {
    height: 40px;
    padding-top: 7px;
    padding-left: 10px;
}

.tree-head {
    flex: none;
    width: 289px;
    height: 26px;
    padding: 3px 0 0 72px;
    text-align: center;
    border-bottom: 1px solid var(--line);
}

.drawings .iconbar {
    border-bottom: 1px solid var(--line);
    width: 100%;
}

.tree {
    width: 289px;
    height: 216px;
    overflow: hidden;
}

.tree li {
    position: relative;
    height: 21px;
    padding-left: 31px;
    border-bottom: 1px solid var(--line);
}

.tree li::before {
    content: "";
    position: absolute;
    left: 8px;
    top: 0;
    width: 16px;
    height: 10px;
    border-left: 1px solid #d8d8d8;
    border-bottom: 1px solid #d8d8d8;
}

.tree li:not(.last)::after {
    content: "";
    position: absolute;
    left: 8px;
    top: 10px;
    height: 11px;
    border-left: 1px solid #d8d8d8;
}

.tree .node {
    padding-left: 21px;
}

.tree .node::before {
    display: none;
}

.node button {
    position: absolute;
    left: 2px;
    top: 3px;
    z-index: 1;
    width: 13px;
    height: 13px;
    line-height: 10px;
    border: 1px solid #888;
    border-radius: 1px;
    background: #fff;
}

.hthumb, .vthumb {
    position: absolute;
    background: #e6e6e8;
    border-radius: 2px;
}

.hthumb {
    left: 13px;
    bottom: 4px;
    width: 175px;
    height: 4px;
}

.vthumb {
    right: 4px;
    top: 80px;
    width: 4px;
    height: 26px;
}

.search {
    display: flex;
    align-items: center;
    height: 26px;
    margin: 0 9px 0 8px;
    padding: 0 12px;
    background: #f4f4f4;
    border-radius: 13px;
}

.search input {
    flex: 1;
    outline: none;
}

.search input::placeholder {
    color: #777;
}

.search svg {
    width: 10px;
    height: 10px;
    stroke: #999;
}

.complist {
    padding: 11px 12px;
}

.complist li {
    width: 204px;
    height: 21px;
    margin-bottom: 4px;
    padding: 0 3px;
    border-radius: 3px;
    white-space: nowrap;
}

.complist .selected {
    background: #c2d9f0;
}

/* properties */
.props {
    flex: 1;
}

.ptab {
    height: 28px;
    padding: 0 10px;
}

.dots + .ptab {
    margin-left: 11px;
}

.ptab.active {
    background: #fff;
    color: #1a7bf2;
}

.props table {
    width: 100%;
    margin-top: 1px;
    table-layout: fixed;
    border-collapse: collapse;
}

.props th {
    height: 24px;
    font-weight: 400;
    background: #ececec;
    border-right: 1px solid var(--line);
    border-bottom: 1px solid var(--line);
}

.props .c-name {
    width: 101px;
}

.props .c-add {
    width: 42px;
    font-weight: 700;
}

.props td {
    height: 25px;
    white-space: nowrap;
}

.props td:first-child {
    padding-left: 15px;
}

.props td:last-child {
    text-align: center;
}

.props .section td {
    position: relative;
    padding-left: 21px;
    text-align: left;
    background: #ebebeb;
    border-bottom: 1px solid #fff;
}

.section .caret {
    position: absolute;
    left: 8px;
    top: 9px;
}

.section .side {
    transform: rotate(-90deg);
}

.props .blue {
    color: #2a5fe8;
}

.props input[type="text"] {
    display: block;
    width: 100%;
    height: 21px;
    padding: 0 2px;
    border: 1px solid #dcdcdc;
}

.props input[type="checkbox"] {
    appearance: none;
    display: block;
    width: 8px;
    height: 8px;
    margin: 0 auto;
    border: 1px solid #b4b4b4;
    border-radius: 50%;
    background: #e2e2e2;
}

.props input[type="checkbox"]:checked {
    background: #1a73e8;
    border-color: #1a73e8;
}

/* 3D view */
.viewport {
    position: relative;
    flex: 1;
    min-width: 0;
    overflow: hidden;
    background: #941e58;
}

.scene {
    display: block;
    width: 100%;
    height: 100%;
    stroke: none;
}

.mark {
    font-family: "Noto Sans CJK SC", sans-serif;
}

.handle {
    position: absolute;
    top: 50%;
    width: 16px;
    height: 60px;
    transform: translateY(-50%);
    background: #4e4e4e;
}

.handle svg {
    width: 6px;
    height: 10px;
    stroke: #bbb;
}

.handle.left {
    left: 0;
    border-radius: 0 3px 3px 0;
}

.handle.right {
    right: 0;
    border-radius: 3px 0 0 3px;
}

.viewtools {
    position: absolute;
    top: 0;
    right: 0;
    width: 33px;
    height: 246px;
    padding: 13px 1px 0 0;
    display: flex;
    flex-direction: column;
    align-items: center;
    gap: 9px;
    background: #fff;
}

.viewtools button, .viewtools svg {
    display: block;
    width: 20px;
    height: 20px;
}

.viewtools .caret {
    margin: -2px 0 0;
}

.viewtools hr {
    width: 23px;
    border: none;
    border-top: 1px solid #555;
    margin: -2px 0;
}

.viewtools text {
    font: 700 8px "Open Sans", sans-serif;
    fill: var(--blue);
    stroke: none;
}

.filled {
    fill: #cfe2fb;
}

/* docked panel at the right edge */
.rightpanel {
    flex: none;
    width: 16px;
    display: flex;
    flex-direction: column;
    overflow: hidden;
    border: 1px solid #bbb;
    border-right: none;
}

.rightpanel .panel-head {
    padding-left: 5px;
}

.rtab {
    flex: none;
    height: 21px;
    margin: 5px 0 0 2px;
    padding-left: 7px;
    text-align: left;
    background: #dcdcdc;
}

.rsearch {
    height: 30px;
    padding: 7px 6px;
    border-top: 1px solid #bbb;
    border-bottom: 1px solid #bbb;
}

.rsearch input {
    width: 14px;
    height: 14px;
}

.rbody {
    flex: 1;
    padding: 12px 0 0 9px;
}

.rbody .caret {
    display: block;
}

.rfoot {
    height: 40px;
    padding: 12px 0 0 1px;
    border-top: 1px solid #bbb;
}

.rfoot input {
    width: 14px;
    height: 14px;
}

.callout {
    position: absolute;
    left: 0;
    top: 0;
    width: 1688px;
    height: 813px;
    stroke: none;
    pointer-events: none;
}

/* status bar, runs past the lower edge of the window */
.statusbar {
    flex: none;
    display: flex;
    align-items: flex-start;
    height: 20px;
    padding-top: 4px;
    line-height: 22px;
    background: #fafafa;
    white-space: nowrap;
}

.stat {
    flex: none;
}

.s1 {
    width: 90px;
    margin-left: -7px;
}

.s2 {
    width: 139px;
}

.s3 {
    width: 111px;
}

.s4 {
    width: 110px;
}

.modes {
    display: flex;
    gap: 4px;
    margin-right: 16px;
}

.modes button {
    flex: none;
    display: flex;
    align-items: center;
    justify-content: space-around;
    width: 25px;
    height: 24px;
    border: 1px solid #999;
    border-radius: 2px;
}

.modes .wide {
    width: 36px;
}

.modes .on {
    background: #cfe3fb;
    border-color: var(--blue);
}

.modes svg {
    width: 15px;
    height: 15px;
}

.diag {
    width: 15px;
    height: 15px;
    margin-right: 4px;
    stroke: var(--ink);
}

.warn {
    width: 105px;
    margin-left: auto;
    overflow: hidden;
}

.warn b {
    display: inline-block;
    width: 14px;
    height: 14px;
    margin-right: 6px;
    line-height: 14px;
    text-align: center;
    color: #fff;
    background: #f0882c;
    border-radius: 50%;
}
```
